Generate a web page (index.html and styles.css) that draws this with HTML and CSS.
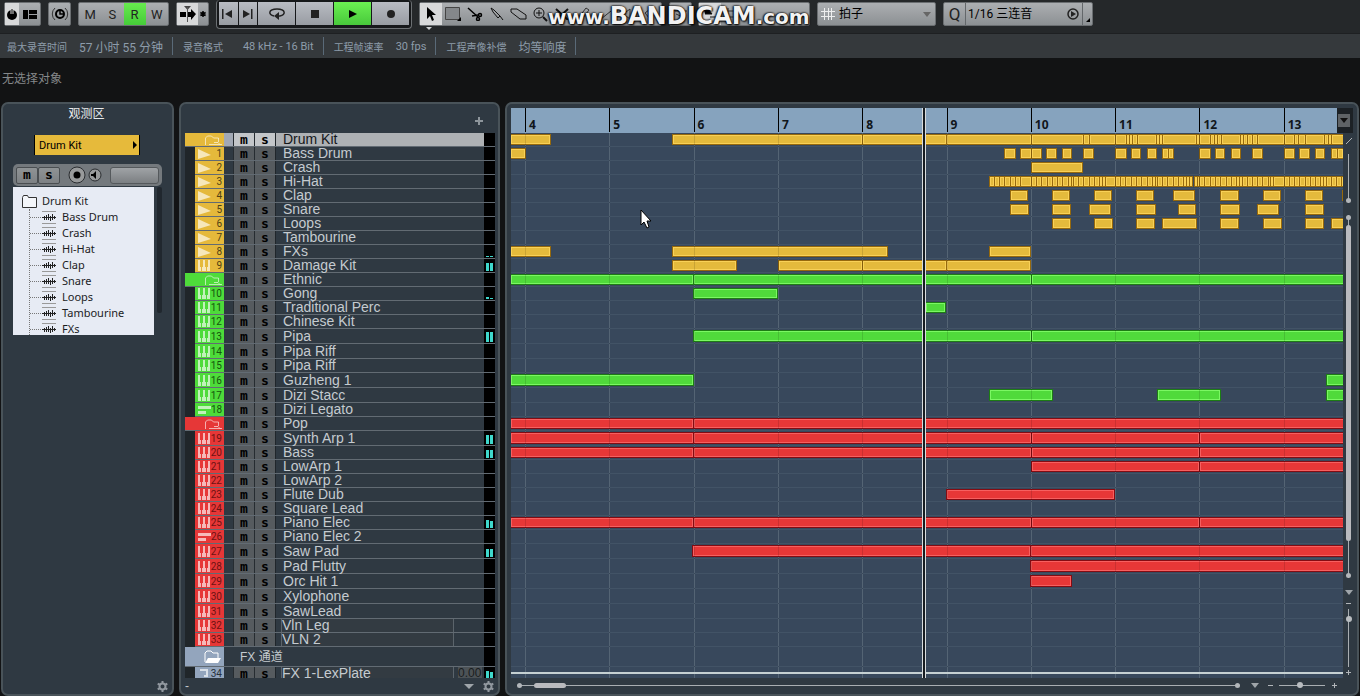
FILE: index.html
```html
<!DOCTYPE html>
<html lang="zh-CN">
<head>
    <meta charset="utf-8">
    <title>Project</title>
    <link rel="stylesheet" href="styles.css">
</head>
<body>
    <header class="toolbar">
        <div class="group group-view">
            <button class="btn btn-light btn-power" aria-label="Activate"><svg width="12" height="12" viewBox="0 0 12 12"><circle cx="6" cy="7" r="5"/><path d="M6 0v6" stroke="#ddd" stroke-width="3"/><path d="M6 1v6" stroke="#000" stroke-width="1"/></svg></button>
            <button class="btn btn-layout" aria-label="Window layout"><svg width="14" height="9" viewBox="0 0 14 9"><path d="M0 0h5v9H0zM6 0h8v4H6zM6 5h8v4H6z"/></svg></button>
        </div>
        <div class="group group-constrain">
            <button class="btn btn-constrain" aria-label="Delay compensation"><svg width="18" height="14" viewBox="0 0 18 14" fill="none" stroke="#000"><circle cx="9" cy="7" r="4" stroke-width="2"/><path d="M9 4v3h3" stroke-width="1.5"/><path d="M4 1a8 8 0 0 0 0 12M14 1a8 8 0 0 1 0 12" stroke="#333"/></svg></button>
        </div>
        <div class="group group-auto">
            <button class="btn">M</button>
            <button class="btn">S</button>
            <button class="btn btn-on">R</button>
            <button class="btn">W</button>
        </div>
        <div class="group group-scroll">
            <button class="btn btn-light" aria-label="Auto scroll"><svg width="18" height="18" viewBox="0 0 18 18"><path d="M1 7h6v5H1zM9 7h3V4l5 5-5 6v-3H9z"/><path d="M5 1h7L8.500 5z" fill="#444"/><path d="M8.500 2v15" stroke="#555"/></svg></button>
            <button class="btn btn-star" aria-label="Suspend scroll"><svg width="6" height="6" viewBox="0 0 8 8" stroke="#000" stroke-width="2"><path d="M4 0v8M.5 2l7 4M.5 6l7-4"/></svg></button>
        </div>
        <div class="transport">
            <button class="btn" aria-label="Previous marker"><svg width="12" height="10" viewBox="0 0 12 10"><path d="M0 0h1.500v10H0zM10 1v8L3 5z" fill="#222"/></svg></button>
            <button class="btn" aria-label="Next marker"><svg width="12" height="10" viewBox="0 0 12 10"><path d="M9 0h1.500v10H9zM1 1v8l7-4z" fill="#222"/></svg></button>
            <button class="btn btn-wide" aria-label="Cycle"><svg width="18" height="13" viewBox="0 0 18 13"><path d="M6 9C0 8 0 2 9 2s9 6 3 7H9" fill="none" stroke="#222" stroke-width="1.500"/><path d="M11 5v8L6 9z" fill="#222"/></svg></button>
            <button class="btn btn-wide" aria-label="Stop"><svg width="8" height="8"><path d="M0 0h8v8H0z" fill="#222"/></svg></button>
            <button class="btn btn-wide btn-on" aria-label="Play"><svg width="8" height="8"><path d="M0 0l8 4-8 4z"/></svg></button>
            <button class="btn btn-wide" aria-label="Record"><svg width="8" height="8"><circle cx="4" cy="4" r="4" fill="#222"/></svg></button>
        </div>
        <div class="group group-tools">
            <button class="btn btn-light" aria-label="Select"><svg width="10" height="15" viewBox="0 0 10 15"><path d="M1 0v12l3-3 2 5 2-1-2-5h4z"/></svg></button>
            <button class="btn" aria-label="Range"><svg width="16" height="14" viewBox="0 0 16 14"><path d="M.5.5h14v12H.5z" fill="#84878a" stroke="#444"/><path d="M16 10v4h-4z"/></svg></button>
            <button class="btn" aria-label="Split"><svg width="16" height="14" viewBox="0 0 16 14" fill="none" stroke="#000" stroke-width="1.500"><path d="M1 1l10 9M5 9l6-1"/><circle cx="13" cy="8" r="1.500"/><circle cx="11" cy="12" r="1.500"/></svg></button>
            <button class="btn" aria-label="Glue"><svg width="14" height="14" viewBox="0 0 14 14" fill="none" stroke="#111"><path d="M1 1l3 2 6 6-2 2-5-6zM10 9l3 4"/></svg></button>
            <button class="btn" aria-label="Erase"><svg width="17" height="12" viewBox="0 0 17 12" fill="none" stroke="#111"><path d="M1 1h6l9 6v4h-6L1 4z"/></svg></button>
            <button class="btn" aria-label="Zoom"><svg width="15" height="15" viewBox="0 0 15 15" fill="none" stroke="#111"><circle cx="6" cy="6" r="5"/><path d="M3 6h6M6 3v6"/><path d="M10 10l4 4" stroke-width="2"/></svg></button>
            <button class="btn" aria-label="Mute"><svg width="14" height="12" viewBox="0 0 14 12" stroke="#111" stroke-width="2"><path d="M1 1l12 11M13 1L1 12"/></svg></button>
            <button class="btn" aria-label="Draw"><svg width="12" height="14" viewBox="0 0 12 14" fill="none" stroke="#333"><path d="M8 1l3 2-7 9-3 1 0-3z"/></svg></button>
            <button class="btn" aria-label="Line"><svg width="12" height="12" viewBox="0 0 12 12" stroke="#333"><path d="M1 11L11 3"/></svg></button>
            <button class="btn" aria-label="Play tool"><svg width="12" height="12" viewBox="0 0 12 12" fill="none" stroke="#333"><path d="M1 4h3l4-3v10L4 8H1z"/></svg></button>
            <button class="btn" aria-label="Colour"><svg width="12" height="12" viewBox="0 0 12 12" fill="none" stroke="#333"><path d="M1 5l5-4 5 5-5 5z"/></svg></button>
        </div>
        <div class="group group-color">
            <button class="btn" aria-label="Select colours"><svg width="14" height="12" viewBox="0 0 14 12" fill="none" stroke="#333"><path d="M1 3h12M9 1l2 2M2 6l9 4"/></svg></button>
        </div>
        <div class="group group-snap">
            <button class="btn btn-light" aria-label="Snap"><svg width="14" height="12" viewBox="0 0 14 12" stroke="#111"><path d="M1 2h5l3 4H2M7 9h6"/></svg></button>
            <button class="btn" aria-label="Snap type"><svg width="14" height="14" viewBox="0 0 14 14" stroke="#333"><path d="M3 1v12M10 1v12M0 4h14M0 10h14"/></svg></button>
        </div>
        <label class="group group-grid">
            <svg width="14" height="12" viewBox="0 0 14 12" stroke="#eee"><path d="M3.500 0v12M7.500 0v12M10.500 0v12M0 3.500h14M0 8.500h14"/></svg>
            <select class="select" aria-label="Grid type"><option>拍子</option></select>
            <span class="caret"></span>
        </label>
        <div class="group group-quantize">
            <button class="btn btn-q">Q</button>
            <select class="select" aria-label="Quantize preset"><option>1/16 三连音</option></select>
            <button class="btn btn-apply" aria-label="Apply quantize"><svg width="12" height="12" viewBox="0 0 12 12"><circle cx="6" cy="6" r="5" fill="none" stroke="#222" stroke-width="1.500"/><path d="M4 3l5 3-5 3z" fill="#222"/></svg></button>
            <button class="btn btn-corner" aria-label="Quantize panel"><svg width="4" height="4"><path d="M4 0v4H0z"/></svg></button>
        </div>
    </header>
    <div class="tool-mark"></div>
    <div class="watermark"><span>www.</span><b>BANDICAM</b><span>.com</span></div>

    <dl class="info-bar">
        <div><dt>最大录音时间</dt><dd>57 小时 55 分钟</dd></div>
        <div><dt class="wide">录音格式</dt><dd class="small">48 kHz - 16 Bit</dd></div>
        <div><dt>工程帧速率</dt><dd class="small">30 fps</dd></div>
        <div><dt>工程声像补偿</dt><dd>均等响度</dd></div>
    </dl>
    <div class="event-info">无选择对象</div>

    <main class="workspace">
        <aside class="panel inspector">
            <h2>观测区</h2>
            <button class="track-picker">Drum Kit<svg width="4" height="8"><path d="M0 0l4 4-4 4z"/></svg></button>
            <div class="control-strip">
                <button class="key">m</button><button class="key">s</button>
                <button class="round" aria-label="Record enable"><svg width="18" height="18" viewBox="0 0 18 18"><circle cx="9" cy="9" r="8" fill="#989a9b" stroke="#2a2d30"/><circle cx="9" cy="9" r="3.500"/></svg></button>
                <button class="round" aria-label="Monitor"><svg width="14" height="14" viewBox="0 0 14 14"><circle cx="7" cy="7" r="6" fill="#989a9b" stroke="#2a2d30"/><path d="M3 6h2l3-3v8L5 8H3z"/></svg></button>
                <span class="strip-slot"></span>
            </div>
            <div class="tree-row">
                <div class="tree">
                    <div class="tree-root"><svg width="15" height="13" viewBox="0 0 15 13"><path d="M.5 12.500V2.500l1-2h4l1 2h8v10z" fill="#f4f6fa" stroke="#333"/></svg>Drum Kit</div>
                    <ul id="tree-items"></ul>
                </div>
                <span class="tree-scroll"></span>
            </div>
            <button class="gear" aria-label="Inspector setup"></button>
        </aside>

        <section class="panel tracks">
            <button class="add-track" aria-label="Add track"><svg width="9" height="9"><path d="M3 0h2v3h3v2H5v3H3V5H0V3h3z" fill="#8d959b"/></svg></button>
            <div class="track-list" id="track-list"></div>
            <div class="tracks-foot"><span>-</span><span class="caret"></span><button class="gear" aria-label="Track list setup"></button></div>
        </section>

        <section class="panel arrange">
            <div class="ruler-row">
                <div class="ruler" id="ruler"></div>
                <div class="ruler-end"><button aria-label="Ruler format"><span class="caret"></span></button></div>
            </div>
            <div class="arrange-body">
                <div class="lanes" id="lanes"></div>
                <div class="side">
                    <svg width="8" height="8"><path d="M1 7l6-6" stroke="#aeb2b6"/></svg>
                    <div class="vscroll vscroll-top"><i></i></div>
                    <div class="vscroll vscroll-main"><i></i><b></b><i></i></div>
                    <span class="caret"></span>
                    <span class="minus"></span>
                    <input class="vzoom" type="range" value="86" aria-label="Vertical zoom">
                    <span class="plus"></span>
                </div>
            </div>
            <div class="arrange-foot">
                <div class="hscroll"><i></i><b></b><i></i></div>
                <span class="caret"></span>
                <span class="minus"></span>
                <input class="hzoom" type="range" value="45" aria-label="Horizontal zoom">
                <span class="plus"></span>
            </div>
        </section>
    </main>

    <svg class="cursor" width="12" height="20" viewBox="0 0 12 20"><path d="M1 1v15l3-3 3 6 2-1-2-6h4z" fill="#fff" stroke="#000"/></svg>

    <script src="script.js"></script>
</body>
</html>
```

FILE: styles.css
```css
* {
    box-sizing: border-box;
}
body {
    display: flex;
    flex-direction: column;
    height: 100vh;
    margin: 0;
    overflow: hidden;
    background: #121314;
    color: #c3c9ce;
    font-family: "Liberation Sans", "Noto Sans CJK SC", sans-serif;
    font-size: 12px;
}
button,
select {
    margin: 0;
    padding: 0;
    border: 0;
    background: none;
    color: #000;
    font-family: inherit;
    font-size: inherit;
}
svg {
    display: block;
    flex: none;
}
.caret {
    flex: none;
    width: 0;
    height: 0;
    border: 4px solid transparent;
    border-top: 5px solid #9fa5aa;
    border-bottom: 0;
}

/* toolbar */
.toolbar {
    display: flex;
    flex: none;
    align-items: flex-start;
    height: 34px;
    padding: 0 4px;
    background: #25282a;
    border-bottom: 1px solid #1e2022;
    font-family: Roboto, "Noto Sans CJK SC", sans-serif;
}
.group {
    display: flex;
    flex: none;
    height: 24px;
    margin: 2px 7px 0 0;
    background: linear-gradient(#acafb2, #8c9093);
    border: 1px solid #6a6e71;
    border-radius: 2px;
}
.btn {
    display: flex;
    flex: 1;
    align-items: center;
    justify-content: center;
}
.btn-light {
    background: #d8d9da;
}
.btn-on {
    background: linear-gradient(#67ea4e, #45cc38);
}
.group-view {
    width: 37px;
}
.group-view .btn-power {
    flex: none;
    width: 14px;
}
.group-constrain {
    width: 23px;
}
.group-auto {
    width: 91px;
    font-size: 13px;
}
.group-auto .btn {
    color: #222;
}
.group-scroll {
    width: 33px;
}
.group-scroll .btn-light {
    flex: none;
    width: 21px;
}
.transport {
    display: flex;
    flex: none;
    gap: 1px;
    width: 196px;
    height: 29px;
    padding: 2px;
    margin-right: 7px;
    border: 1px solid #6c7073;
    border-top: 0;
    border-radius: 4px;
    background: #16181a;
}
.transport .btn {
    flex: 1;
    height: 23px;
    background: linear-gradient(#b9bcc3, #989ca2);
}
.transport .btn-wide {
    flex: 2;
}
.transport .btn-on {
    background: linear-gradient(#6bf052, #48c93b);
}
.group-tools {
    width: 243px;
}
.group-color {
    width: 23px;
    margin-right: 6px;
}
.group-snap {
    width: 112px;
}
.group-snap .btn {
    flex: none;
    width: 22px;
}
.select {
    flex: 1;
    min-width: 0;
    appearance: none;
    font-size: 12px;
}
.group-grid {
    align-items: center;
    width: 119px;
    padding: 0 4px 0 3px;
    gap: 4px;
}
.group-grid .caret {
    border-top-color: #666;
}
.group-quantize {
    width: 150px;
}
.btn-q {
    flex: none;
    width: 22px;
    border-right: 1px solid #63676a;
    font-size: 17px;
    color: #222;
}
.group-quantize .select {
    padding-left: 2px;
}
.btn-apply {
    flex: none;
    width: 18px;
}
.btn-corner {
    flex: none;
    align-items: flex-end;
    width: 10px;
    padding-bottom: 3px;
    border-left: 1px solid #63676a;
}
.tool-mark {
    position: absolute;
    top: 27px;
    left: 426px;
    border: 3px solid transparent;
    border-top-color: #d0d2d4;
}
.watermark {
    position: absolute;
    top: 3px;
    left: 548px;
    display: flex;
    align-items: baseline;
    color: #f2f2f2;
    font-family: "DejaVu Sans", sans-serif;
    font-size: 20px;
    font-weight: bold;
    line-height: 27px;
    text-shadow: 0 0 2px #000, 1px 1px 2px #000, -1px 0 2px #000;
}
.watermark b {
    font-size: 24px;
}

/* info lines */
.info-bar {
    display: flex;
    flex: none;
    align-items: center;
    height: 24px;
    margin: 0;
    background: #35393c;
    color: #8d9caa;
    font-family: Roboto, "Noto Sans CJK SC", sans-serif;
}
.info-bar div {
    display: flex;
    align-items: center;
    gap: 12px;
    height: 18px;
    padding: 0 9px 0 10px;
    border-right: 1px solid #5a6a78;
}
.info-bar div:first-child {
    padding-left: 7px;
}
.info-bar dt {
    font-size: 10px;
}
.info-bar dt.wide {
    width: 48px;
}
.info-bar dd {
    margin: 0;
}
.info-bar dd.small {
    font-size: 11px;
}
.event-info {
    flex: none;
    height: 44px;
    padding: 0 2px;
    color: #85888a;
    line-height: 42px;
}

/* panels */
.workspace {
    display: flex;
    flex: 1;
    gap: 5px;
    min-height: 0;
    padding: 0 1px;
}
.panel {
    display: flex;
    flex-direction: column;
    min-width: 0;
    border: 2px solid #495359;
    border-radius: 7px;
    background: #2f3942;
}
.gear {
    width: 11px;
    height: 11px;
}

/* inspector */
.inspector {
    flex: none;
    width: 173px;
    padding-left: 10px;
}
.inspector h2 {
    margin: 0 12px 0 0;
    color: #e8eaec;
    font-size: 12px;
    font-weight: normal;
    line-height: 20px;
    text-align: center;
}
.track-picker {
    display: flex;
    align-items: center;
    justify-content: space-between;
    width: 106px;
    height: 20px;
    margin: 11px 0 9px 21px;
    padding: 0 2px 0 4px;
    background: #e6ba3b;
    border: solid #000;
    border-width: 0 1px;
    font-family: Roboto, sans-serif;
    font-size: 11px;
}
.control-strip {
    display: flex;
    align-items: center;
    width: 149px;
    height: 22px;
    padding: 2px 3px;
    border-radius: 5px;
    background: #74797d;
}
.key {
    display: flex;
    align-items: center;
    justify-content: center;
    font-family: "DejaVu Sans Mono", monospace;
    font-size: 13px;
    font-weight: bold;
    line-height: 13px;
}
.control-strip .key {
    width: 22px;
    height: 17px;
    padding-bottom: 2px;
    border: 1px solid #4a4e51;
    border-radius: 2px;
    background: linear-gradient(#8f9395, #7d8184);
}
.key + .round {
    margin-left: 8px;
}
.round + .round {
    margin-left: 2px;
}
.strip-slot {
    width: 49px;
    height: 17px;
    margin-left: auto;
    border: 1px solid #55595c;
    border-radius: 3px;
    background: linear-gradient(#a0a3a6, #7b7f82);
}
.tree-row {
    display: flex;
    align-items: flex-start;
    gap: 3px;
    margin-top: 1px;
}
.tree {
    width: 141px;
    height: 148px;
    padding-top: 6px;
    overflow: hidden;
    background: #e7ebf4;
    color: #1b1c1e;
    font-family: "Noto Sans", sans-serif;
    font-size: 11px;
    line-height: 16px;
}
.tree-root {
    display: flex;
    align-items: center;
    gap: 5px;
    height: 16px;
    padding-left: 9px;
}
.tree ul {
    margin: 0 0 0 16px;
    padding: 0;
    border-left: 1px dotted #777;
    list-style: none;
}
.tree li {
    display: flex;
    align-items: center;
    height: 16px;
}
.tree li::before {
    content: "";
    width: 11px;
    border-top: 1px dotted #777;
}
.tree li svg {
    margin: 0 6px 0 1px;
}
.tree-scroll {
    width: 5px;
    height: 126px;
    border-radius: 2px;
    background: #20272e;
}
.inspector .gear {
    margin: auto 4px 2px auto;
}

/* track list */
.tracks {
    flex: none;
    width: 321px;
    padding: 0 3px 0 4px;
}
.add-track {
    margin: 13px 11px 7px auto;
}
.track-list {
    flex: 1;
    min-height: 0;
    overflow: hidden;
}
.track {
    display: flex;
    height: 14px;
    border-bottom: 1px solid #626b73;
    background: #2f3942;
}
.track-tall {
    height: 15px;
}
.indent {
    width: 10px;
    height: 15px;
    background: #20262a;
}
.tag {
    display: flex;
    align-items: center;
    justify-content: space-between;
    width: 29px;
    padding: 0 2px 0 3px;
    color: #4e3f14;
    font-family: Roboto, sans-serif;
    font-size: 10px;
    line-height: 13px;
}
.tag svg {
    fill: #fff;
    fill-opacity: 0.65;
}
.folder .indent {
    display: none;
}
.folder .tag {
    width: 39px;
    padding-left: 18px;
}
.yellow .tag {
    background: #e5b93b;
}
.green .tag {
    background: #4edb3a;
    color: #14550c;
}
.red .tag {
    background: #e63737;
    color: #6d1212;
}
.blue .tag {
    background: #93a5bd;
    color: #26303c;
}
.gap {
    width: 9px;
}
.track .key {
    width: 21px;
    border-left: 1px solid #262c31;
    background: #565b5f;
}
.name {
    flex: 1;
    min-width: 0;
    padding-left: 7px;
    border-left: 1px solid #20262b;
    color: #c5cbd0;
    font-size: 14px;
    line-height: 13px;
    white-space: nowrap;
}
.track-tall .name {
    line-height: 14px;
}
.meter {
    display: flex;
    align-items: flex-end;
    gap: 1px;
    width: 11px;
    padding: 0 2px 1px;
    background: #000;
}
.meter i {
    width: 3px;
    background: #3fd8cc;
}
.selected .gap {
    background: #a2a9b5;
}
.selected .key {
    background: #c3c6c9;
}
.selected .name {
    background: #aeb1b4;
    color: #15171a;
}
.framed .name {
    display: flex;
    padding-left: 5px;
}
.framed .name span {
    width: 173px;
    border: solid #5b646b;
    border-width: 0 1px;
    background: #333b42;
}
.name output {
    width: 24px;
    margin-left: 4px;
    background: #4c5256;
    color: #1a1d20;
    font-size: 12px;
}
.fx-head {
    height: 20px;
}
.fx-head .name {
    border: 0;
    font-size: 12px;
    line-height: 20px;
}
.tracks-foot {
    display: flex;
    align-items: center;
    gap: 9px;
    height: 16px;
    padding-right: 1px;
}
.tracks-foot .caret {
    margin-left: auto;
    border-width: 5px 5px 0;
}

/* arrange window */
.arrange {
    flex: 1;
    padding: 4px 0 0 4px;
}
.ruler-row,
.arrange-body {
    display: flex;
}
.ruler-row {
    height: 25px;
    padding-right: 14px;
}
.ruler {
    position: relative;
    flex: 1;
    overflow: hidden;
    background: #86a3be;
    color: #11161b;
    font-family: "Noto Sans", sans-serif;
    font-size: 12px;
    font-weight: bold;
}
.tick {
    position: absolute;
    top: 0;
    height: 24px;
    padding: 10px 0 0 3px;
    border-left: 1px solid #000;
    line-height: 14px;
}
.ruler-end {
    position: relative;
    width: 16px;
    margin: 0 -10px 0 -6px;
    padding: 6px 1px;
    background: #1c2125;
}
.ruler-end button {
    display: flex;
    align-items: center;
    justify-content: center;
    width: 12px;
    height: 13px;
    background: #5f6366;
}
.ruler-end .caret {
    border-top-color: #111;
}
.arrange-body {
    flex: 1;
    min-height: 0;
}
.lanes {
    position: relative;
    flex: 1;
    overflow: hidden;
    background: #38485c;
}
.lane {
    position: relative;
    height: 14px;
    border-bottom: 1px solid #425366;
}
.lane-tall {
    height: 15px;
}
.lane-head {
    height: 20px;
}
.clip {
    position: absolute;
    top: 1px;
    bottom: 1px;
    border: 1px solid;
}
.yellow .clip {
    background: #e4ba3c;
    border-color: #96690c;
    box-shadow: inset 0 0 0 1px #f9d157;
}
.green .clip {
    background: #50da3b;
    border-color: #1d7c14;
    box-shadow: inset 0 0 0 1px #7bf763;
}
.red .clip {
    background: #e73737;
    border-color: #850b12;
    box-shadow: inset 0 0 0 1px #f66060;
}
.bar-line {
    position: absolute;
    top: 0;
    bottom: 0;
    width: 1px;
    background: #607285;
}
.bar-shade {
    position: absolute;
    top: 0;
    bottom: 0;
    width: 1px;
    background: rgba(0, 0, 0, 0.12);
}
.playhead {
    position: absolute;
    top: 0;
    bottom: 0;
    width: 4px;
    border: solid #d8dcde;
    border-width: 0 1px;
    background: #161b20;
}
.end-line {
    position: absolute;
    right: 0;
    bottom: 4px;
    left: 0;
    height: 2px;
    background: #c5d0d2;
}
.side {
    display: flex;
    flex-direction: column;
    align-items: center;
    width: 14px;
    padding: 4px 3px 3px 0;
}
.vscroll,
.hscroll {
    display: flex;
    align-items: center;
}
.vscroll {
    flex-direction: column;
    width: 5px;
    background: linear-gradient(#a9aeb2, #a9aeb2) center / 1px 100% no-repeat;
}
.vscroll i,
.hscroll i {
    width: 5px;
    height: 5px;
    border-radius: 50%;
    background: #b2b6ba;
}
.vscroll b,
.hscroll b {
    border-radius: 3px;
    background: #b9babe;
}
.vscroll-top {
    height: 49px;
    margin: 9px 0 12px;
}
.vscroll-top i {
    margin-top: auto;
}
.vscroll-main {
    flex: 1;
    margin-bottom: 12px;
}
.vscroll-main b {
    width: 5px;
    height: 87%;
    margin: 5px 0 auto;
}
.minus {
    width: 5px;
    height: 1px;
    background: #b2b6ba;
}
.plus {
    width: 5px;
    height: 5px;
    background: linear-gradient(#b2b6ba, #b2b6ba) center / 1px 5px no-repeat, linear-gradient(#b2b6ba, #b2b6ba) center / 5px 1px no-repeat;
}
.side .minus {
    margin: 8px 0 5px;
}
.side .plus {
    margin-top: 3px;
}
.vzoom,
.hzoom {
    margin: 0;
    appearance: none;
    background: linear-gradient(#a9aeb2, #a9aeb2) center / 100% 1px no-repeat;
}
.vzoom {
    width: 5px;
    height: 58px;
    writing-mode: vertical-lr;
    direction: rtl;
    background-size: 1px 100%;
}
.hzoom {
    width: 46px;
    height: 6px;
}
.vzoom::-webkit-slider-thumb,
.hzoom::-webkit-slider-thumb {
    width: 6px;
    height: 6px;
    appearance: none;
    border-radius: 50%;
    background: #b9bdc1;
}
.arrange-foot {
    display: flex;
    align-items: center;
    height: 16px;
    padding: 0 20px 2px 6px;
}
.hscroll {
    flex: 1;
    height: 5px;
    background: linear-gradient(#a9aeb2, #a9aeb2) center / 100% 1px no-repeat;
}
.hscroll b {
    width: 32px;
    height: 5px;
    margin: 0 auto 0 12px;
}
.arrange-foot .caret {
    margin: 0 9px 0 11px;
}
.arrange-foot .hzoom {
    margin: 0 7px 0 6px;
}
.cursor {
    position: absolute;
    top: 209px;
    left: 640px;
}
```

FILE: script.js
```js
// visible width of the arrange window in grid units, clips are given in the same units
var VIEW = 832;
var BAR = 84.3;
var FIRST_BAR = 14;

var ICONS = {
    audio: '<svg width="13" height="10"><path d="M0 0l13 6-13 4z"/></svg>',
    midi: '<svg width="12" height="11"><path d="M0 0h2v7h1v4H0zM5 0h2v7h1v4H4V7h1zM10 0h2v11H9V7h1z"/></svg>',
    inst: '<svg width="13" height="8"><path d="M0 0h13v3H0zM0 5h8v3H0z"/></svg>',
    folder: '<svg width="19" height="10" viewBox="0 0 19 10"><path d="M2.500 10V3l2-2h4l2 2h5v4M6 9.500h13M11 7.500h4l2 2" style="fill:none;stroke:#fff;stroke-opacity:.6"/></svg>',
    open: '<svg width="19" height="14" viewBox="0 0 19 14"><path d="M2 12V3l2-2h4l2 2h5v5" style="fill:none;stroke:#fff"/><path d="M2 13l3-5h13l-3 5z" style="fill-opacity:1"/></svg>',
    fx: '<svg width="12" height="11"><path d="M2 1h8v8H6V7h2V3H2z"/></svg>'
};

var LONG = [[-1, 182], [182, 520], [520, 834]];
var LONG_CUT = [[-1, 182], [182, 520], [520, 688], [688, 834]];

// turn a list of edges into clips that touch each other
function chain(edges) {
    var out = [];
    for (var i = 0; i < edges.length - 1; i++) {
        out.push([edges[i], edges[i + 1]]);
    }
    return out;
}

var HATS = chain([478, 483, 488, 493, 499, 504, 509, 520, 525, 530, 536, 541, 546, 551, 557, 560, 562, 567, 572, 578, 583, 588, 591, 594, 604, 609, 614, 620, 625, 630, 636, 641, 644, 646, 651, 656, 662, 667, 672, 675, 678, 681])
    .concat(chain([683, 686, 688, 693, 699, 704, 709, 715, 720, 725, 728, 731, 736, 741, 746, 751, 757, 759, 762, 773, 778, 783, 788, 794, 799, 804, 809, 812, 815, 820, 825, 830, 835]));

var TRACKS = [
    { name: 'Drum Kit', color: 'yellow', icon: 'folder', cls: 'folder selected', clips: [[-1, 39]].concat(chain([161, 351, 435, 520, 572, 578, 604, 615, 618, 621, 626, 645, 648, 651, 685, 688, 699, 703, 706, 710, 729, 732, 736, 741, 746, 773, 783, 787, 794, 813, 817, 820, 834])) },
    { name: 'Bass Drum', n: 1, color: 'yellow', icon: 'audio', clips: [[-1, 14], [493, 504], [509, 520], [520, 530], [535, 545], [551, 560], [572, 582], [604, 615], [620, 629], [636, 645], [651, 657], [657, 662], [688, 699], [704, 713], [720, 729], [741, 751], [773, 783], [788, 798], [804, 813], [820, 826], [826, 832]] },
    { name: 'Crash', n: 2, color: 'yellow', icon: 'audio', clips: [[520, 571]] },
    { name: 'Hi-Hat', n: 3, color: 'yellow', icon: 'audio', clips: HATS },
    { name: 'Clap', n: 4, color: 'yellow', icon: 'audio', clips: [[499, 516], [541, 558], [583, 600], [625, 642], [662, 683], [709, 727], [752, 769], [794, 811], [831, 840]] },
    { name: 'Snare', n: 5, color: 'yellow', icon: 'audio', clips: [[499, 517], [541, 559], [578, 599], [625, 644], [667, 684], [709, 728], [746, 767], [794, 812]] },
    { name: 'Loops', n: 6, color: 'yellow', icon: 'audio', clips: [[541, 559], [583, 601], [625, 643], [651, 685], [709, 727], [752, 770], [794, 812], [820, 834]] },
    { name: 'Tambourine', n: 7, color: 'yellow', icon: 'audio' },
    { name: 'FXs', n: 8, color: 'yellow', icon: 'audio', meter: [1, 1], clips: [[-1, 39], [161, 376], [478, 519]] },
    { name: 'Damage Kit', n: 9, color: 'yellow', icon: 'midi', meter: [8, 8], clips: [[161, 225], [267, 351], [351, 435], [435, 519]] },
    { name: 'Ethnic', color: 'green', icon: 'folder', cls: 'folder', clips: LONG },
    { name: 'Gong', n: 10, color: 'green', icon: 'midi', meter: [2, 1], clips: [[182, 266]] },
    { name: 'Traditional Perc', n: 11, color: 'green', icon: 'midi', clips: [[414, 434]] },
    { name: 'Chinese Kit', n: 12, color: 'green', icon: 'midi' },
    { name: 'Pipa', n: 13, tall: true, color: 'green', icon: 'midi', meter: [10, 10], clips: [[182, 520], [520, 834]] },
    { name: 'Pipa Riff', n: 14, tall: true, color: 'green', icon: 'midi' },
    { name: 'Pipa Riff', n: 15, color: 'green', icon: 'midi' },
    { name: 'Guzheng 1', n: 16, tall: true, color: 'green', icon: 'midi', clips: [[-1, 182], [815, 834]] },
    { name: 'Dizi Stacc', n: 17, tall: true, color: 'green', icon: 'midi', clips: [[478, 541], [646, 709], [815, 834]] },
    { name: 'Dizi Legato', n: 18, color: 'green', icon: 'inst' },
    { name: 'Pop', color: 'red', icon: 'folder', cls: 'folder', clips: [[-1, 182], [182, 834]] },
    { name: 'Synth Arp 1', n: 19, tall: true, color: 'red', icon: 'midi', meter: [9, 9], clips: LONG_CUT },
    { name: 'Bass', n: 20, color: 'red', icon: 'midi', meter: [8, 8], clips: LONG_CUT },
    { name: 'LowArp 1', n: 21, color: 'red', icon: 'midi', clips: [[520, 688], [688, 834]] },
    { name: 'LowArp 2', n: 22, color: 'red', icon: 'midi' },
    { name: 'Flute Dub', n: 23, color: 'red', icon: 'midi', clips: [[435, 603]] },
    { name: 'Square Lead', n: 24, color: 'red', icon: 'midi' },
    { name: 'Piano Elec', n: 25, color: 'red', icon: 'midi', meter: [8, 7], clips: LONG_CUT },
    { name: 'Piano Elec 2', n: 26, color: 'red', icon: 'inst' },
    { name: 'Saw Pad', n: 27, tall: true, color: 'red', icon: 'midi', meter: [8, 8], clips: [[181, 519], [519, 834]] },
    { name: 'Pad Flutty', n: 28, tall: true, color: 'red', icon: 'midi', clips: [[519, 834]] },
    { name: 'Orc Hit 1', n: 29, tall: true, color: 'red', icon: 'midi', clips: [[519, 560]] },
    { name: 'Xylophone', n: 30, tall: true, color: 'red', icon: 'midi' },
    { name: 'SawLead', n: 31, tall: true, color: 'red', icon: 'midi' },
    { name: 'Vln Leg', n: 32, color: 'red', icon: 'midi', cls: 'framed' },
    { name: 'VLN 2', n: 33, color: 'red', icon: 'midi', cls: 'framed' },
    { name: 'FX 通道', color: 'blue', icon: 'open', cls: 'folder fx-head' },
    { name: 'FX 1-LexPlate', n: 34, color: 'blue', icon: 'fx', cls: 'framed', value: '0.00', meter: [8, 7] }
];

function pct(units) {
    return (units / VIEW * 100) + '%';
}

function trackHtml(t) {
    var html = '<div class="track ' + t.color + ' ' + (t.cls || '') + (t.tall ? ' track-tall' : '') + '">';
    html += '<span class="indent"></span><span class="tag">' + ICONS[t.icon] + (t.n || '') + '</span><span class="gap"></span>';
    if (t.icon !== 'open') {
        html += '<button class="key">m</button><button class="key">s</button>';
    }
    html += '<div class="name"><span>' + t.name + '</span>' + (t.value ? '<output>' + t.value + '</output>' : '') + '</div>';
    html += '<div class="meter">';
    (t.meter || []).forEach(function(level) {
        html += '<i style="height:' + level + 'px"></i>';
    });
    return html + '</div></div>';
}

function laneHtml(t) {
    var size = t.icon === 'open' ? ' lane-head' : (t.tall ? ' lane-tall' : '');
    var html = '<div class="lane ' + t.color + size + '">';
    (t.clips || []).forEach(function(c) {
        html += '<span class="clip" style="left:' + pct(c[0]) + ';width:' + pct(c[1] - c[0] + 1) + '"></span>';
    });
    return html + '</div>';
}

var lines = '', shades = '', ruler = '';
for (var i = 0; i < 10; i++) {
    var left = pct(FIRST_BAR + i * BAR);
    lines += '<span class="bar-line" style="left:' + left + '"></span>';
    shades += '<span class="bar-shade" style="left:' + left + '"></span>';
    ruler += '<span class="tick" style="left:' + left + '">' + (i + 4) + '</span>';
}
var playhead = '<span class="playhead" style="left:' + pct(411) + '"></span>';

document.getElementById('ruler').innerHTML = ruler + playhead;
document.getElementById('track-list').innerHTML = TRACKS.map(trackHtml).join('');
document.getElementById('lanes').innerHTML = lines + TRACKS.map(laneHtml).join('') + shades + '<span class="end-line"></span>' + playhead;

var wave = '<svg width="14" height="13" viewBox="0 0 14 13"><path d="M0 .5h14M0 12.500h14" stroke="#999"/><path d="M0 6.500h14M2.500 5v4M4.500 4v5M6.500 3v6M8.500 5v5M10.500 3v6M12.500 5v3" stroke="#222"/></svg>';
document.getElementById('tree-items').innerHTML = TRACKS.slice(1, 9).map(function(t) {
    return '<li>' + wave + t.name + '</li>';
}).join('');

var gear = '<svg width="11" height="11" viewBox="0 0 11 11"><circle cx="5.500" cy="5.500" r="3" fill="none" stroke="#9299a0" stroke-width="2"/><path d="M5.500 0v2M5.500 9v2M.7 2.700l1.800 1M8.500 7.300l1.800 1M.7 8.300l1.800-1M8.500 3.700l1.800-1" stroke="#9299a0" stroke-width="2"/></svg>';
document.querySelectorAll('.gear').forEach(function(button) {
    button.innerHTML = gear;
});
```
